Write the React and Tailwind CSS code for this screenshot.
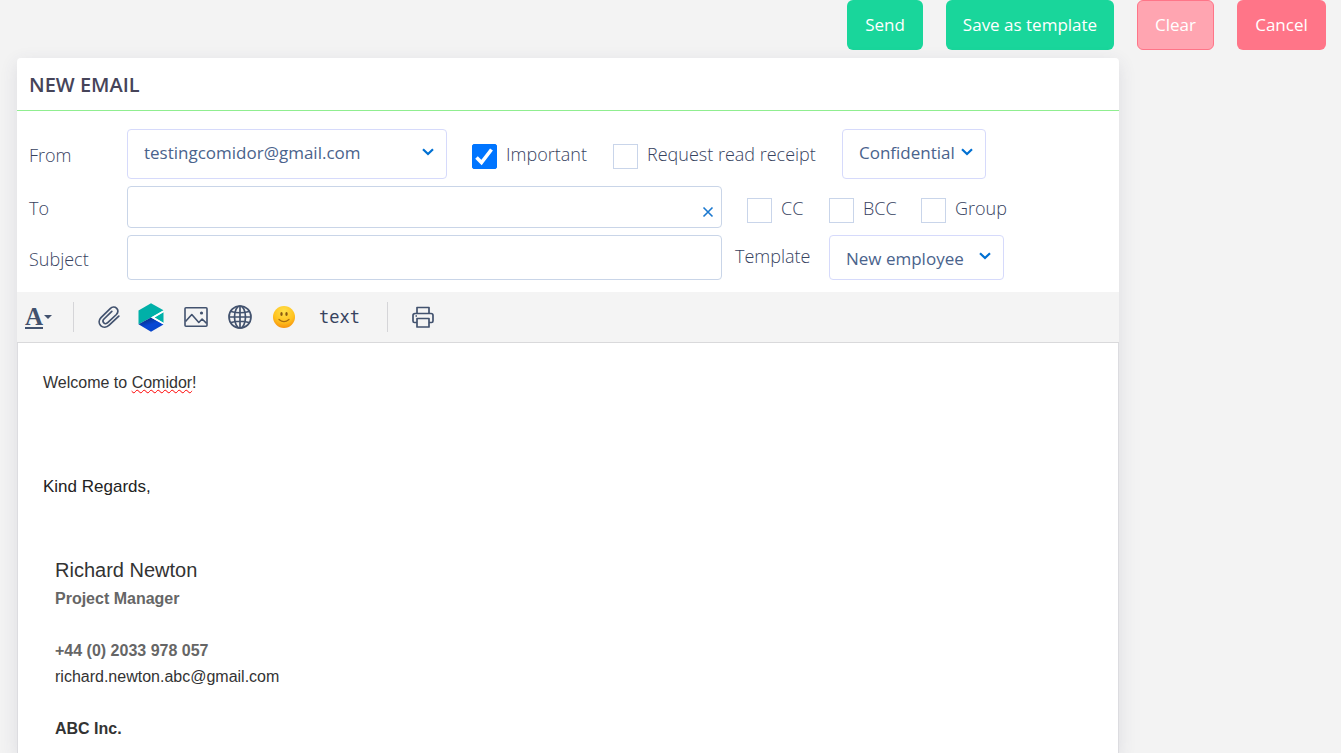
import { useState } from "react";

const Chevron = () => (
  <svg viewBox="0 0 12 8" className="h-2 w-3 pointer-events-none" fill="none" stroke="#0070d2" strokeWidth="2.2">
    <path d="M1 1.2 6 6l5-4.800" />
  </svg>
);

const PaperclipIcon = () => (
  <svg viewBox="0 0 22 22" className="h-[22px] w-[22px]" fill="none" stroke="#42526e" strokeWidth="1.700" strokeLinecap="round" strokeLinejoin="round">
    <path d="M20.800 10.200 11.200 19.200C8.600 21.600 5 21.800 2.700 19.600.5 17.300.8 14 3 11.700L12.200 2.700c1.900-1.900 4.700-2 6.500-.4 1.700 1.700 1.500 4.400-.3 6.200l-8.700 8.200c-1.200 1.200-2.900 1.200-3.900.2s-1-2.700.2-3.900L13.800 5.400" />
  </svg>
);

const LogoIcon = () => (
  <svg viewBox="0 0 26 29" className="h-[29px] w-[26px]">
    <defs>
      <linearGradient id="logoBlue" x1="0" y1="0" x2="0.6" y2="1">
        <stop offset="0.1" stopColor="#062a78" />
        <stop offset="0.6" stopColor="#0747d6" />
        <stop offset="1" stopColor="#0745c8" />
      </linearGradient>
    </defs>
    <path d="M13 .3 25.500 7.300 13 14.500.5 21.300V7.500z" fill="#00b0a8" />
    <path d="M13 14.500 25.500 21.500 13 28.700.5 21.300z" fill="url(#logoBlue)" />
    <path d="M25.500 9.200v10.800L16.500 14.500z" fill="#00b0a8" />
    <path d="M25.500 7.500v1.600l-9 5.400 9 5.300v1.700L13 14.500z" fill="#fff" />
  </svg>
);

const ImageIcon = () => (
  <svg viewBox="0 0 24 22" className="h-[22px] w-6" fill="none" stroke="#42526e" strokeWidth="1.600" strokeLinejoin="round">
    <rect x="1" y="1.800" width="22" height="18.400" rx="1" />
    <path d="m1.500 15.500 6.300-7 7 8 3.300-3.500 4.500 4.300" />
    <circle cx="17.500" cy="7" r="1.600" fill="#42526e" stroke="none" />
  </svg>
);

const GlobeIcon = () => (
  <svg viewBox="0 0 24 24" className="h-6 w-6" fill="none" stroke="#42526e" strokeWidth="1.700">
    <circle cx="12" cy="12" r="11" />
    <ellipse cx="12" cy="12" rx="5.500" ry="11" />
    <path d="M12 1v22M1 12h22M3 6.500c5.500 1.500 12.500 1.500 18 0M3 17.500c5.500-1.500 12.500-1.500 18 0" />
  </svg>
);

const SmileIcon = () => (
  <svg viewBox="0 0 24 24" className="h-6 w-6">
    <defs>
      <radialGradient id="smile" cx="0.5" cy="0.25" r="0.8">
        <stop offset="0" stopColor="#ffe04a" />
        <stop offset="0.6" stopColor="#ffc21f" />
        <stop offset="1" stopColor="#f58a0b" />
      </radialGradient>
    </defs>
    <circle cx="12" cy="12" r="11" fill="url(#smile)" />
    <ellipse cx="9.500" cy="9" rx="1.200" ry="2" fill="#8a5a10" />
    <ellipse cx="14.500" cy="9" rx="1.200" ry="2" fill="#8a5a10" />
    <path d="M7 14.500c3 2.600 7 2.600 10 0" fill="none" stroke="#a66a10" strokeWidth="1.200" strokeLinecap="round" />
  </svg>
);

const PrinterIcon = () => (
  <svg viewBox="0 0 22 22" className="h-[22px] w-[22px]" fill="none" stroke="#42526e" strokeWidth="1.700" strokeLinejoin="round">
    <path d="M5 7.500V1.500h12v6" />
    <path d="M5 16.500H2.500a1.500 1.500 0 0 1-1.500-1.500V9.500a2 2 0 0 1 2-2h16a2 2 0 0 1 2 2V15a1.500 1.500 0 0 1-1.500 1.500H17" />
    <path d="M5 12.500h12v8.500H5zM3.500 10h1.500" />
  </svg>
);

function Check({ id, label, width, defaultChecked }) {
  const [checked, setChecked] = useState(!!defaultChecked);

  return (
    <div className={`flex items-center gap-[9px] whitespace-nowrap ${width}`}>
      <span className="grid shrink-0 mt-[5px]">
        <input
          id={id}
          type="checkbox"
          checked={checked}
          onChange={(e) => setChecked(e.target.checked)}
          className="col-start-1 row-start-1 appearance-none h-[25px] w-[25px] border border-[#c9d5ea] bg-white checked:bg-[#0075ff] checked:border-[#0075ff] checked:rounded-[2px]"
        />
        {checked && (
          <svg viewBox="0 0 25 25" className="col-start-1 row-start-1 h-[25px] w-[25px] pointer-events-none" fill="none" stroke="#fff" strokeWidth="3.600">
            <path d="m4.500 13.500 5 5L19.500 5.500" />
          </svg>
        )}
      </span>
      <label htmlFor={id}>{label}</label>
    </div>
  );
}

function Dropdown({ label, value, className, selectClass }) {
  return (
    <div className={`grid items-center shrink-0 ${className}`}>
      <select
        aria-label={label}
        className={`col-start-1 row-start-1 appearance-none w-full h-full rounded-[4px] border border-[#d6dafb] bg-white pl-4 text-[17px] font-normal text-[#4a638c] ${selectClass}`}
      >
        <option>{value}</option>
      </select>
      <span className="col-start-1 row-start-1 justify-self-end pr-[13px] pb-1 pointer-events-none">
        <Chevron />
      </span>
    </div>
  );
}

export default function App() {
  return (
    <div className="min-h-screen flex flex-col bg-[#f3f3f3] font-['Open_Sans',sans-serif] font-[350] text-[18px] text-[#37435f]">
      <div className="flex justify-end gap-[23px] pr-[15px] text-[17px] font-normal text-white">
        <button className="h-[50px] w-[76px] rounded-md bg-[#19d69b]">Send</button>
        <button className="h-[50px] w-[168px] rounded-md bg-[#19d69b]">Save as template</button>
        <button className="h-[50px] w-[77px] rounded-md border border-[#ff7588] bg-[#ffa5b1]">Clear</button>
        <button className="h-[50px] w-[89px] rounded-md bg-[#ff7588]">Cancel</button>
      </div>

      <div className="mt-2 ml-[17px] mr-[222px] flex-1 flex flex-col rounded-t-[4px] bg-white shadow-[0_5px_18px_rgba(60,60,100,0.12)]">
        <h1 className="h-[53px] flex items-center px-3 pt-[2px] border-b border-[#90ee90] text-[20px] font-semibold text-[#464459]">
          NEW EMAIL
        </h1>

        <div className="flex flex-col gap-[7px] pt-[18px] pb-3 pl-3">
          <div className="flex items-center h-[50px]">
            <span className="w-[98px] pt-[2px]">From</span>
            <Dropdown label="From" value="testingcomidor@gmail.com" className="w-80 h-[50px]" selectClass="pb-[2px]" />
            <div className="flex gap-[25px] ml-[25px]">
              <Check id="important" label="Important" width="w-[116px]" defaultChecked />
              <Check id="receipt" label="Request read receipt" width="w-[204px]" />
              <Dropdown label="Sensitivity" value="Confidential" className="w-36 h-[50px]" selectClass="pb-[2px]" />
            </div>
          </div>

          <div className="flex items-center h-[42px]">
            <label htmlFor="to" className="w-[98px] pt-[2px]">To</label>
            <div className="grid items-center w-[595px] h-[42px]">
              <input id="to" type="text" className="col-start-1 row-start-1 w-full h-full rounded-[4px] border border-[#c9d5e8] px-4" />
              <button aria-label="Clear recipients" className="col-start-1 row-start-1 justify-self-end mr-2 mt-[10px]">
                <svg viewBox="0 0 12 12" className="h-3 w-3" stroke="#1a78cf" strokeWidth="1.600">
                  <path d="m1.500 1.500 9 9M10.500 1.500l-9 9" />
                </svg>
              </button>
            </div>
            <div className="flex gap-[25px] ml-[25px] pt-[2px]">
              <Check id="cc" label="CC" width="w-[57px]" />
              <Check id="bcc" label="BCC" width="w-[67px]" />
              <Check id="group" label="Group" width="w-[87px]" />
            </div>
          </div>

          <div className="flex items-center h-[45px]">
            <label htmlFor="subject" className="w-[98px] pt-1">Subject</label>
            <input id="subject" type="text" className="w-[595px] h-[45px] rounded-[4px] border border-[#c9d5e8] px-4" />
            <span className="w-[94px] ml-[13px] pb-[2px]">Template</span>
            <Dropdown label="Template" value="New employee" className="w-[175px] h-[45px]" selectClass="pt-[2px]" />
          </div>
        </div>

        <div className="flex items-center h-[51px] pl-2 bg-[#f4f4f4] border-b border-[#d9d9db]">
          <button aria-label="Font" className="flex items-center gap-px w-12">
            <span className="font-['Liberation_Serif',serif] font-bold text-[25px] leading-[21px] text-[#42526e] border-b-2 border-[#42526e]">A</span>
            <svg viewBox="0 0 8 4" className="h-1 w-2" fill="#42526e">
              <path d="M0 0h8L4 4z" />
            </svg>
          </button>
          <div className="h-[30px] w-px bg-[#d5d5d8]" />
          <button aria-label="Attach file" className="ml-6"><PaperclipIcon /></button>
          <button aria-label="Insert from workspace" className="ml-[18px]"><LogoIcon /></button>
          <button aria-label="Insert image" className="ml-5"><ImageIcon /></button>
          <button aria-label="Insert link" className="ml-5"><GlobeIcon /></button>
          <button aria-label="Insert emoji" className="ml-5"><SmileIcon /></button>
          <button className="ml-[23px] w-[68px] pt-[2px] text-left text-[17px] font-normal font-['DejaVu_Sans_Mono',monospace]">text</button>
          <div className="h-[30px] w-px bg-[#d5d5d8]" />
          <button aria-label="Print" className="ml-6"><PrinterIcon /></button>
        </div>

        <div className="flex-1 border-x border-[#dcdce0] pt-[27px] px-[25px] font-['Liberation_Sans',sans-serif] font-normal text-[16px] leading-[26px] text-[#333]">
          <p>
            Welcome to{" "}
            <span className="underline decoration-wavy decoration-1 decoration-[#f00] underline-offset-1">Comidor</span>!
          </p>
          <p className="mt-[78px] text-[17px] leading-[26px] text-[#222]">Kind Regards,</p>
          <div className="mt-[54px] pl-3">
            <p className="text-[20px] leading-8">Richard Newton</p>
            <p className="font-bold text-[#666]">Project Manager</p>
            <p className="mt-[26px] font-bold text-[#666]">+44 (0) 2033 978 057</p>
            <p>richard.newton.abc@gmail.com</p>
            <p className="mt-[26px] font-bold">ABC Inc.</p>
          </div>
        </div>
      </div>
    </div>
  );
}
